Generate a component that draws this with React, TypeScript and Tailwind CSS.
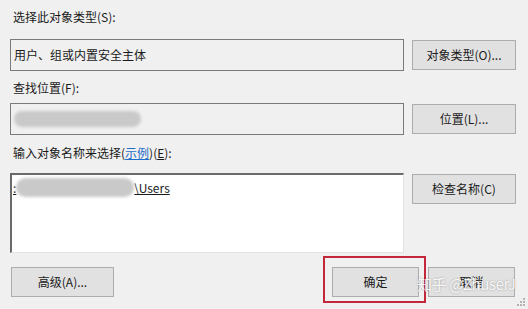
import React from 'react';

const font = { fontFamily: '"Noto Sans CJK SC", "Microsoft YaHei", sans-serif' };

function Btn({ children, className = '' }: { children: React.ReactNode; className?: string }) {
  return (
    <div
      className={`flex h-[30px] items-center justify-center border border-[#adadad] bg-[#e1e1e1] text-[12px] text-[#1a1a1a] ${className}`}
    >
      {children}
    </div>
  );
}

function Blur({ className = '' }: { className?: string }) {
  return <div className={`rounded-full bg-[#c9c9c9] blur-[1.5px] ${className}`} />;
}

export default function App() {
  return (
    <div
      className="relative h-[309px] w-[528px] overflow-hidden bg-[#f0f0f0] pl-[10px] pt-[9px] text-[12px] text-[#1a1a1a]"
      style={font}
    >
      <div className="h-[16px] pl-[3px] leading-[16px]">选择此对象类型(S):</div>
      <div className="mt-[14px] flex items-center">
        <div className="flex h-[32px] w-[394px] items-center border border-[#7a7a7a] pl-[3px] pb-[1px]">
          用户、组或内置安全主体
        </div>
        <Btn className="ml-[8px] w-[104px]">对象类型(O)...</Btn>
      </div>

      <div className="mt-[9px] h-[16px] pl-[3px] leading-[16px]">查找位置(F):</div>
      <div className="mt-[7px] flex items-center">
        <div className="flex h-[32px] w-[394px] items-center border border-[#7a7a7a] pl-[3px]">
          <Blur className="h-[16px] w-[127px]" />
        </div>
        <Btn className="ml-[8px] w-[104px]">位置(L)...</Btn>
      </div>

      <div className="mt-[10px] h-[16px] pl-[3px] leading-[16px]">
        输入对象名称来选择(<span className="text-[#1a6dc9] underline">示例</span>)(<span className="underline">E</span>):
      </div>
      <div className="mt-[12px] flex items-start">
        <div className="h-[80px] w-[394px] border-l-2 border-t-2 border-b border-r border-l-[#6a6a6a] border-t-[#6a6a6a] border-b-[#e3e3e3] border-r-[#e3e3e3] bg-white pl-[1px] pt-[3px]">
          <div className="flex items-center">
            <span className="underline">:</span>
            <Blur className="h-[19px] w-[118px]" />
            <span className="underline">\Users</span>
          </div>
        </div>
        <Btn className="ml-[8px] mt-[1px] w-[104px]">检查名称(C)</Btn>
      </div>

      <div className="mt-[14px] flex items-center pl-[1px] pr-[13px]">
        <Btn className="w-[103px]">高级(A)...</Btn>
        <div className="flex-1" />
        <div className="relative">
          <Btn className="w-[87px] border-[#9ab6c2]">确定</Btn>
          <div className="absolute -bottom-[6px] -left-[9px] -right-[7px] -top-[11px] border-2 border-[#c4263a]" />
        </div>
        <Btn className="ml-[9px] w-[87px]">取消</Btn>
      </div>

      <div
        className="absolute left-[417px] top-[274px] whitespace-nowrap text-[15px] leading-[20px] tracking-[-0.4px] text-white/90"
        style={{ textShadow: '0 0 2px rgba(0,0,0,0.35)' }}
      >
        知乎 @ZhuserJ
      </div>

      <svg className="absolute bottom-[2px] right-[2px]" width="10" height="10" viewBox="0 0 10 10">
        <rect x="7" y="1" width="2" height="2" fill="#b4b4b4" />
        <rect x="4" y="4" width="2" height="2" fill="#b4b4b4" />
        <rect x="7" y="4" width="2" height="2" fill="#b4b4b4" />
        <rect x="1" y="7" width="2" height="2" fill="#b4b4b4" />
        <rect x="4" y="7" width="2" height="2" fill="#b4b4b4" />
        <rect x="7" y="7" width="2" height="2" fill="#b4b4b4" />
      </svg>
    </div>
  );
}
